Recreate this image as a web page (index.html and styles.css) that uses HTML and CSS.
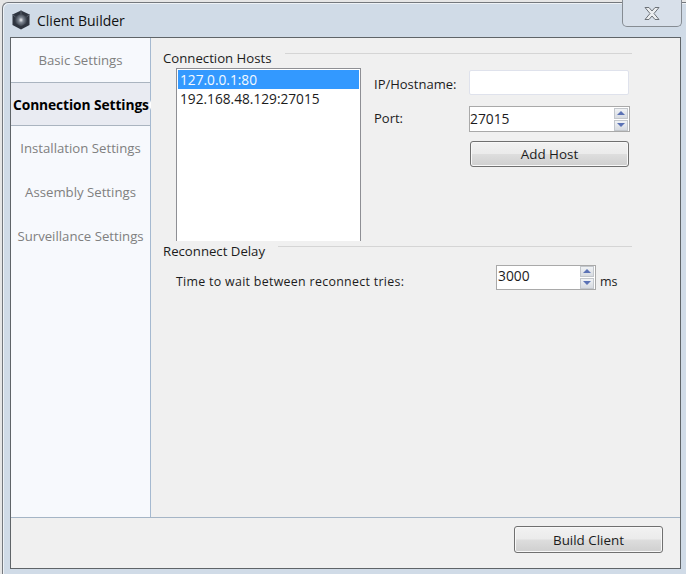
FILE: index.html
```html
<!DOCTYPE html>
<html lang="en">
<head>
<meta charset="utf-8">
<title>Client Builder</title>
<link rel="stylesheet" href="styles.css">
</head>
<body>
<div class="window">
  <header class="titlebar">
    <svg class="logo" width="20" height="20" viewBox="0 0 20 20">
      <defs><radialGradient id="glow"><stop offset="0" stop-color="#f4f6f8"/><stop offset=".4" stop-color="#7f8793"/><stop offset="1" stop-color="#343b46"/></radialGradient></defs>
      <path d="M10 .5 18.500 4.500v10.500L10 19.500 1.500 15V4.500z" fill="#2f3540"/>
      <path d="M10 3.500 16 7v6l-6 3.500L4 13V7z" fill="url(#glow)"/>
      <path d="M10 .5V4M1.500 4.500l3 2.500M18.500 4.500l-3 2.500" stroke="#59616d" fill="none"/>
    </svg>
    <span class="title">Client Builder</span>
    <button class="close" aria-label="Close">
      <svg width="16" height="15" viewBox="0 0 16 15">
        <path d="M1 1.500h4l3 3.500 3-3.500h4L10 7.500l5 6h-4L8 10l-3 3.500H1l5-6z" fill="#eceef0" stroke="#6d7278" stroke-linejoin="round"/>
      </svg>
    </button>
  </header>
  <div class="client">
    <div class="upper">
      <nav class="sidebar">
        <a class="tab">Basic Settings</a>
        <a class="tab active">Connection Settings</a>
        <a class="tab">Installation Settings</a>
        <a class="tab">Assembly Settings</a>
        <a class="tab">Surveillance Settings</a>
      </nav>
      <main class="panel">
        <section class="hosts">
          <div class="group-head"><span>Connection Hosts</span><i></i></div>
          <div class="hosts-body">
            <ul class="list">
              <li class="selected">127.0.0.1:80</li>
              <li>192.168.48.129:27015</li>
            </ul>
            <div class="form">
              <div class="row row-ip"><label>IP/Hostname:</label><input class="field" type="text"></div>
              <div class="row row-port"><label>Port:</label>
                <div class="spin spin-port"><span class="val">27015</span>
                  <div class="arrows"><b class="up"></b><b class="down"></b></div>
                </div>
              </div>
              <button class="btn add">Add Host</button>
            </div>
          </div>
        </section>
        <section class="delay">
          <div class="group-head head-delay"><span>Reconnect Delay</span><i></i></div>
          <div class="delay-row">
            <label>Time to wait between reconnect tries:</label>
            <div class="spin spin-delay"><span class="val">3000</span>
              <div class="arrows"><b class="up"></b><b class="down"></b></div>
            </div>
            <span class="unit">ms</span>
          </div>
        </section>
      </main>
    </div>
    <footer class="footer"><button class="btn build">Build Client</button></footer>
  </div>
</div>
</body>
</html>
```
FILE: styles.css
```css
* { box-sizing: border-box; }
html, body { margin: 0; height: 100%; overflow: hidden; }
body {
  background: #e6e6e6;
  font-family: "Open Sans", "Noto Sans", sans-serif;
  font-size: 13px;
  color: #1c1c1c;
  padding: 2px 0 0 2px;
}
.window {
  height: 574px;
  background: #d0dbe7;
  border: 1px solid #74787d;
  border-right: 0;
  border-radius: 6px 0 0 0;
  box-shadow: inset 1px 1px 0 #eef2f6;
  display: flex;
  flex-direction: column;
  padding: 0 5px 0 7px;
}
.titlebar {
  height: 34px;
  flex: none;
  display: flex;
  align-items: center;
  padding: 0 0 0 1px;
  position: relative;
}
.logo { margin: -1px 0 0 0; }
.title { font-size: 14px; color: #111; margin: 0 0 0 6px; }
.close {
  position: absolute;
  right: -1px;
  top: -3px;
  width: 60px;
  height: 27px;
  background: #d8e0ea;
  border: 1px solid #868c93;
  border-top: 0;
  border-radius: 0 0 5px 5px;
  padding: 0;
  display: flex;
  align-items: center;
  justify-content: center;
}
.client {
  flex: none;
  width: 671px;
  height: 532px;
  background: #f0f0f0;
  border: 1px solid #5f6468;
  display: flex;
  flex-direction: column;
}
.upper { height: 480px; flex: none; display: flex; border-bottom: 1px solid #a5b5c6; }
.sidebar {
  width: 140px;
  flex: none;
  background: #f7f9fd;
  border-right: 1px solid #a5b9d0;
  display: flex;
  flex-direction: column;
}
.tab {
  height: 44px;
  flex: none;
  display: flex;
  align-items: center;
  justify-content: center;
  white-space: nowrap;
  color: #808080;
  font-size: 13.200px;
}
.tab.active {
  position: relative;
  background: #e9ebf2;
  border-top: 1px solid #aab4c0;
  border-bottom: 1px solid #aab4c0;
  color: #000;
  font-weight: 700;
  width: 139px;
  padding-left: 2px;
  justify-content: flex-start;
  font-size: 13.800px;
  letter-spacing: -.1px;
}
.tab.active::after {
  content: "";
  position: absolute;
  right: -1px;
  top: 17px;
  border-top: 5px solid transparent;
  border-bottom: 5px solid transparent;
  border-right: 2px solid #fff;
}
.panel { flex: 1; padding: 13px 48px 0 12px; }
.group-head { display: flex; align-items: flex-start; height: 15px; line-height: 15px; white-space: nowrap; font-size: 13.200px; }
.group-head i { flex: 1; height: 1px; background: #d5d5d5; margin: 2px 0 0 13px; }
.hosts { height: 193px; }
.hosts-body { display: flex; padding: 2px 0 0 13px; }
.list {
  list-style: none;
  margin: 0;
  padding: 1px;
  width: 185px;
  height: 173px;
  background: #fff;
  border: 1px solid #8e8f94;
  border-bottom: 0;
  flex: none;
}
.list li { height: 19px; line-height: 19px; padding-left: 2px; font-size: 13.700px; }
.list li.selected { background: #3399ff; color: #f4f9ff; }
.form { margin-left: 13px; width: 256px; padding-top: 2px; }
.row { display: flex; align-items: center; }
.row label { width: 95px; flex: none; }
.row-ip { height: 25px; }
.row-ip label { margin-top: 2px; }
.row-port { height: 26px; margin-top: 11px; }
.row-port label { margin-bottom: 2px; }
.field {
  width: 160px;
  height: 25px;
  background: #fff;
  border: 1px solid #dfe2ec;
  border-radius: 2px;
  padding: 0;
  outline: 0;
}
.spin {
  display: flex;
  align-items: center;
  justify-content: space-between;
  background: #fff;
  border: 1px solid #a9a9a9;
  padding: 0 1px 0 0;
}
.spin .val { font-size: 13.800px; }
.spin-port { width: 161px; height: 26px; }
.spin-port .val { margin-top: -2px; }
.spin-delay { width: 100px; height: 25px; padding-left: 1px; }
.spin-delay .val { margin-top: -3px; }
.arrows { width: 14px; display: flex; flex-direction: column; gap: 1px; }
.arrows b {
  display: flex;
  height: 11px;
  align-items: center;
  justify-content: center;
  background: linear-gradient(#f0f2f5, #d7dbe1);
  border: 1px solid #c3c7cc;
}
.arrows b::before {
  content: "";
  border-left: 4px solid transparent;
  border-right: 4px solid transparent;
}
.up::before { border-bottom: 4px solid #5b72b5; }
.down::before { border-top: 4px solid #5b72b5; }
.btn {
  display: block;
  font: inherit;
  font-size: 13.400px;
  color: #1c1c1c;
  border: 1px solid #707070;
  border-radius: 3px;
  padding: 0;
  background: linear-gradient(#f2f2f2 0, #ebebeb 48%, #dddddd 52%, #cfcfcf 100%);
  box-shadow: inset 0 0 0 1px #f8f8f8;
}
.add { width: 159px; height: 26px; margin: 9px 0 0 96px; }
.build { width: 149px; height: 27px; }
.delay-row { display: flex; align-items: center; padding: 7px 0 0 13px; height: 29px; }
.delay-row label { width: 320px; flex: none; margin-top: 8px; font-size: 12.400px; letter-spacing: .3px; }
.unit { margin: 9px 0 0 4px; font-size: 12.500px; }
.footer {
  flex: 1;
  display: flex;
  justify-content: flex-end;
  align-items: flex-start;
  padding: 8px 17px 0 0;
}
```
